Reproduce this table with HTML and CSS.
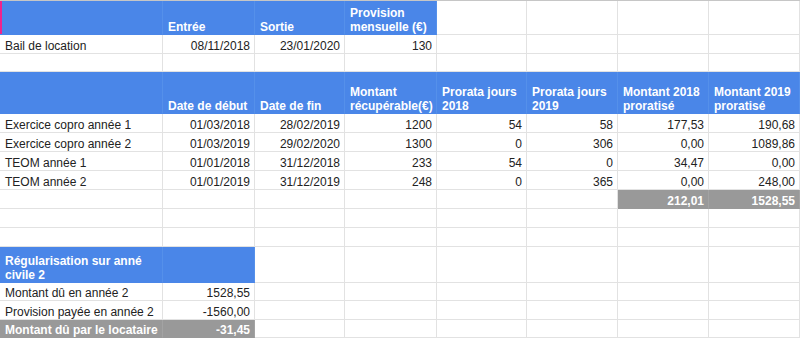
FILE: index.html
```html
<!DOCTYPE html>
<html lang="fr">
<head>
<meta charset="utf-8">
<title>Régularisation des charges</title>
<link rel="stylesheet" href="styles.css">
</head>
<body>
<div class="sheet">
  <div class="c h cursor"></div>
  <div class="c h">Entrée</div>
  <div class="c h">Sortie</div>
  <div class="c h">Provision<br>mensuelle (€)</div>
  <div class="c"></div><div class="c"></div><div class="c"></div><div class="c"></div>

  <div class="c">Bail de location</div>
  <div class="c r">08/11/2018</div>
  <div class="c r">23/01/2020</div>
  <div class="c r">130</div>
  <div class="c"></div><div class="c"></div><div class="c"></div><div class="c"></div>

  <div class="c"></div><div class="c"></div><div class="c"></div><div class="c"></div>
  <div class="c"></div><div class="c"></div><div class="c"></div><div class="c"></div>

  <div class="c h"></div>
  <div class="c h">Date de début</div>
  <div class="c h">Date de fin</div>
  <div class="c h">Montant<br>récupérable(€)</div>
  <div class="c h">Prorata jours<br>2018</div>
  <div class="c h">Prorata jours<br>2019</div>
  <div class="c h">Montant 2018<br>proratisé</div>
  <div class="c h">Montant 2019<br>proratisé</div>

  <div class="c">Exercice copro année 1</div>
  <div class="c r">01/03/2018</div>
  <div class="c r">28/02/2019</div>
  <div class="c r">1200</div>
  <div class="c r">54</div>
  <div class="c r">58</div>
  <div class="c r">177,53</div>
  <div class="c r">190,68</div>

  <div class="c">Exercice copro année 2</div>
  <div class="c r">01/03/2019</div>
  <div class="c r">29/02/2020</div>
  <div class="c r">1300</div>
  <div class="c r">0</div>
  <div class="c r">306</div>
  <div class="c r">0,00</div>
  <div class="c r">1089,86</div>

  <div class="c">TEOM année 1</div>
  <div class="c r">01/01/2018</div>
  <div class="c r">31/12/2018</div>
  <div class="c r">233</div>
  <div class="c r">54</div>
  <div class="c r">0</div>
  <div class="c r">34,47</div>
  <div class="c r">0,00</div>

  <div class="c">TEOM année 2</div>
  <div class="c r">01/01/2019</div>
  <div class="c r">31/12/2019</div>
  <div class="c r">248</div>
  <div class="c r">0</div>
  <div class="c r">365</div>
  <div class="c r">0,00</div>
  <div class="c r">248,00</div>

  <div class="c"></div><div class="c"></div><div class="c"></div><div class="c"></div>
  <div class="c"></div><div class="c"></div>
  <div class="c r t">212,01</div>
  <div class="c r t">1528,55</div>

  <div class="c"></div><div class="c"></div><div class="c"></div><div class="c"></div>
  <div class="c"></div><div class="c"></div><div class="c"></div><div class="c"></div>

  <div class="c"></div><div class="c"></div><div class="c"></div><div class="c"></div>
  <div class="c"></div><div class="c"></div><div class="c"></div><div class="c"></div>

  <div class="c h">Régularisation sur anné<br>civile 2</div>
  <div class="c h"></div>
  <div class="c"></div><div class="c"></div><div class="c"></div><div class="c"></div><div class="c"></div><div class="c"></div>

  <div class="c">Montant dû en année 2</div>
  <div class="c r">1528,55</div>
  <div class="c"></div><div class="c"></div><div class="c"></div><div class="c"></div><div class="c"></div><div class="c"></div>

  <div class="c">Provision payée en année 2</div>
  <div class="c r">-1560,00</div>
  <div class="c"></div><div class="c"></div><div class="c"></div><div class="c"></div><div class="c"></div><div class="c"></div>

  <div class="c t">Montant dû par le locataire</div>
  <div class="c r t">-31,45</div>
  <div class="c"></div><div class="c"></div><div class="c"></div><div class="c"></div><div class="c"></div><div class="c"></div>
</div>
</body>
</html>
```

FILE: styles.css
```css
html, body {
  margin: 0;
  padding: 0;
  background: #ffffff;
}

body {
  font-family: "Liberation Sans", Arial, sans-serif;
  font-size: 12px;
  color: #222222;
  overflow: hidden;
}

.sheet {
  display: grid;
  grid-template-columns: 163px 92px 90px 92px 90px 91px 91px 91px;
  grid-template-rows: 34px 19px 18px 42px 19px 19px 19px 19px 19px 19px 19px 36px 18px 19px 18px;
  border-top: 1px solid #c6c6c6;
  width: 800px;
}

.c {
  box-sizing: border-box;
  border-right: 1px solid #e2e2e2;
  border-bottom: 1px solid #e2e2e2;
  padding: 0 4px 0 5px;
  line-height: 14px;
  display: flex;
  align-items: flex-end;
  white-space: nowrap;
  overflow: hidden;
}

.r {
  justify-content: flex-end;
  text-align: right;
}

.h {
  background: #4a86e8;
  color: #ffffff;
  font-weight: bold;
  border-right-color: #5590ea;
  border-bottom-color: #4a86e8;
}

.t {
  background: #999999;
  color: #ffffff;
  font-weight: bold;
  border-right-color: #a3a3a3;
  border-bottom-color: #999999;
}

.cursor {
  box-shadow: inset 2px 0 0 #f0238c;
}
```
